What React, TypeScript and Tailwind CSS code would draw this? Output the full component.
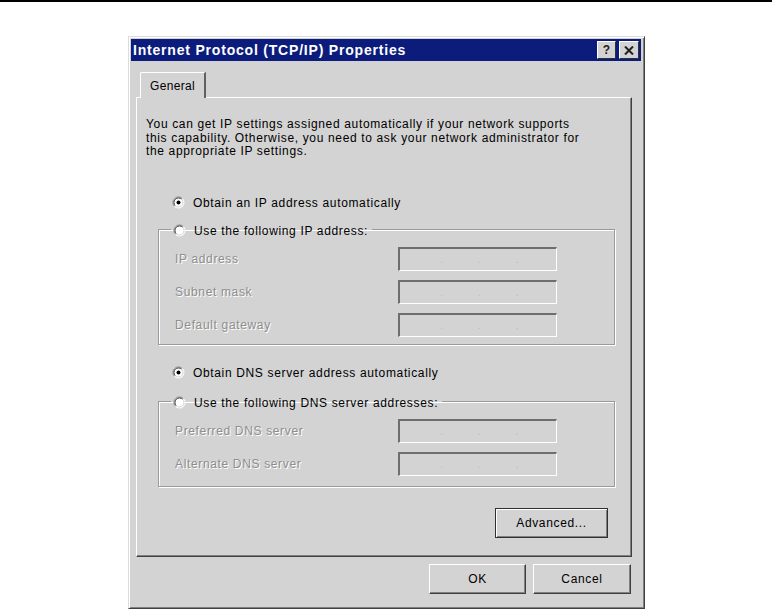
import React from 'react';

const FONT = "font-['Liberation_Sans',Arial,sans-serif]";

function Radio({ checked = false }: { checked?: boolean }) {
  return (
    <svg width="13" height="13" viewBox="0 0 13 13" className="shrink-0">
      <circle cx="6.5" cy="6.5" r="5.5" fill="#fff" />
      {/* sunken rim: dark on top-left, light on bottom-right */}
      <path d="M2.6 10.4 A5.5 5.5 0 0 1 10.4 2.6" stroke="#808080" strokeWidth="1" fill="none" />
      <path d="M10.4 2.6 A5.5 5.5 0 0 1 2.6 10.4" stroke="#ffffff" strokeWidth="1" fill="none" />
      <path d="M3.3 9.7 A4.5 4.5 0 0 1 9.7 3.3" stroke="#404040" strokeWidth="1" fill="none" />
      <path d="M9.7 3.3 A4.5 4.5 0 0 1 3.3 9.7" stroke="#d4d4d4" strokeWidth="1" fill="none" />
      {checked && <circle cx="6.5" cy="6.5" r="2" fill="#000" />}
    </svg>
  );
}

function IpField() {
  return (
    <div className="w-[159px] h-[24px] border-t-2 border-l-2 border-t-[#6e6e6e] border-l-[#6e6e6e] border-b border-r border-b-white border-r-white bg-[#d3d3d3] flex items-center pl-[40px] gap-[34px] text-[11px] text-[#bdbdbd]">
      <span>.</span>
      <span>.</span>
      <span>.</span>
    </div>
  );
}

function FieldRow({ label }: { label: string }) {
  return (
    <div className="flex items-center h-[24px]">
      <span className="w-[223px] text-[12px] text-[#8e8e8e] [text-shadow:1px_1px_0_#fff]">{label}</span>
      <IpField />
    </div>
  );
}

function Button({ label, width, strong = false }: { label: string; width: string; strong?: boolean }) {
  return (
    <button
      className={`${width} h-[30px] bg-[#d3d3d3] text-[12px] text-black flex items-center justify-center ${
        strong
          ? 'border border-[#303030] shadow-[inset_1px_1px_0_#fff,inset_-1px_-1px_0_#808080]'
          : 'border border-t-white border-l-white border-r-[#404040] border-b-[#404040] shadow-[inset_-1px_-1px_0_#808080]'
      }`}
    >
      {label}
    </button>
  );
}

export default function App() {
  return (
    <div className={`w-[772px] h-[609px] bg-white border-t-2 border-black overflow-hidden tracking-[0.65px] ${FONT}`}>
      {/* Dialog window */}
      <div className="ml-[128px] mt-[34px] w-[517px] h-[573px] bg-[#d3d3d3] border border-t-[#dcdcdc] border-l-[#dcdcdc] border-r-[#404040] border-b-[#404040] shadow-[inset_1px_1px_0_#fff,inset_-1px_-1px_0_#808080] pt-[2px] pl-[2px] pr-[3px] flex flex-col">
        {/* Title bar */}
        <div className="h-[22px] bg-[#0b1c7c] flex items-center justify-between pl-[2px] pr-[2px]">
          <span className="text-white font-bold text-[14px] tracking-[0.8px]">Internet Protocol (TCP/IP) Properties</span>
          <div className="flex gap-[3px]">
            <div className="w-[19px] h-[18px] bg-[#d3d3d3] border border-t-white border-l-white border-r-[#303030] border-b-[#303030] flex items-center justify-center text-[12px] font-bold text-[#202020] leading-none tracking-normal">
              ?
            </div>
            <div className="w-[20px] h-[18px] bg-[#d3d3d3] border border-t-white border-l-white border-r-[#303030] border-b-[#303030] flex items-center justify-center">
              <svg width="10" height="9" viewBox="0 0 10 9">
                <path d="M1 0.5 L9 8.5 M9 0.5 L1 8.5" stroke="#202020" strokeWidth="2" />
              </svg>
            </div>
          </div>
        </div>

        {/* Tabs */}
        <div className="mt-[11px] ml-[5px] w-[496px] flex flex-col">
          <div className="flex pl-[4px]">
            <div className="relative -mb-[1px] z-10 w-[66px] h-[26px] bg-[#d3d3d3] border-t border-l border-t-white border-l-white border-r-2 border-r-[#606060] rounded-tl-[2px] flex items-center justify-center text-[12px] text-black tracking-[0.3px]">
              General
            </div>
          </div>

          {/* Tab panel */}
          <div className="h-[460px] border border-t-white border-l-white border-r-[#404040] border-b-[#404040] shadow-[inset_-1px_-1px_0_#808080] flex flex-col">
            <p className="pt-[20px] pl-[9px] text-[12px] leading-[13.5px] text-black">
              You can get IP settings assigned automatically if your network supports
              <br />
              this capability. Otherwise, you need to ask your network administrator for
              <br />
              the appropriate IP settings.
            </p>

            <div className="mt-[36px] ml-[35px] h-[16px] flex items-center gap-[8px] text-[12px]">
              <Radio checked />
              <span>Obtain an IP address automatically</span>
            </div>

            <fieldset className="mt-[11px] ml-[21px] w-[457px] border border-[#9a9a9a] shadow-[inset_1px_1px_0_#fff,1px_1px_0_#fff] pl-[16px] pb-[7px]">
              <legend className="ml-[-4px] pl-[2px] pr-[4px] h-[16px]">
                <span className="flex items-center gap-[8px] text-[12px]">
                  <Radio />
                  <span>Use the following IP address:</span>
                </span>
              </legend>
              <div className="mt-[9px] flex flex-col gap-[9px]">
                <FieldRow label="IP address" />
                <FieldRow label="Subnet mask" />
                <FieldRow label="Default gateway" />
              </div>
            </fieldset>

            <div className="mt-[20px] ml-[35px] h-[16px] flex items-center gap-[8px] text-[12px]">
              <Radio checked />
              <span>Obtain DNS server address automatically</span>
            </div>

            <fieldset className="mt-[13px] ml-[21px] w-[457px] border border-[#9a9a9a] shadow-[inset_1px_1px_0_#fff,1px_1px_0_#fff] pl-[16px] pb-[10px]">
              <legend className="ml-[-4px] pl-[2px] pr-[4px] h-[16px]">
                <span className="flex items-center gap-[8px] text-[12px]">
                  <Radio />
                  <span>Use the following DNS server addresses:</span>
                </span>
              </legend>
              <div className="mt-[9px] flex flex-col gap-[9px]">
                <FieldRow label="Preferred DNS server" />
                <FieldRow label="Alternate DNS server" />
              </div>
            </fieldset>

            <div className="mt-[21px] flex justify-end pr-[23px]">
              <Button label="Advanced..." width="w-[113px]" strong />
            </div>
          </div>
        </div>

        {/* Footer buttons */}
        <div className="mt-[7px] flex justify-end gap-[7px] pr-[10px]">
          <Button label="OK" width="w-[97px]" />
          <Button label="Cancel" width="w-[98px]" />
        </div>
      </div>
    </div>
  );
}
